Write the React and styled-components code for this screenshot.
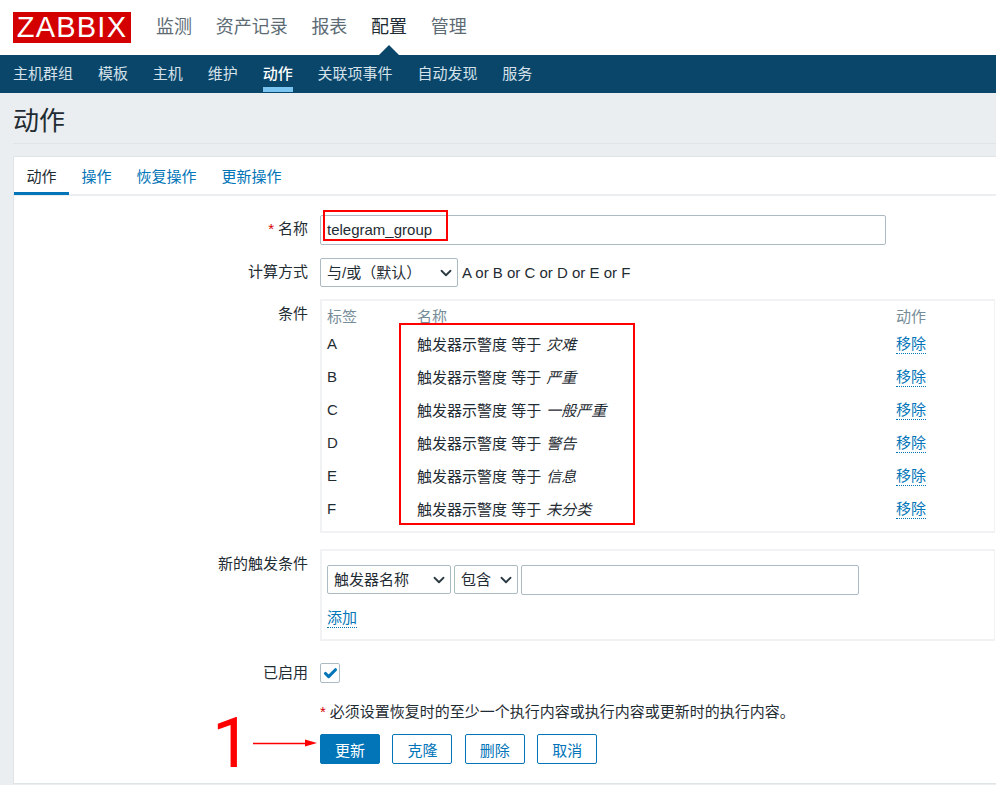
import React from "react";
import styled, { createGlobalStyle } from "styled-components";
import { ChevronDown, Check } from "lucide-react";

const Global = createGlobalStyle`
  html, body { margin: 0; padding: 0; background: #ebeef0; }
  body { width: 996px; height: 785px; overflow: hidden; font-family: "Liberation Sans", "Noto Sans CJK SC", sans-serif; font-size: 15px; color: #1f2c33; text-spacing-trim: space-all; }
  * { box-sizing: border-box; }
`;

const Page = styled.div`position: relative; width: 996px; height: 785px; overflow: hidden;`;
const Header = styled.header`height: 55px; background: #fff; display: flex; align-items: flex-start; padding: 12px 0 0 13px; gap: 25px;`;
const Logo = styled.div`
  width: 118px; height: 31px; background: #d40000; color: #fff;
  font-size: 29px; line-height: 31px; text-align: center; letter-spacing: 1.2px; font-family: "Liberation Sans", sans-serif; font-weight: 400;
`;
const MainNav = styled.nav`display: flex; gap: 23.7px;`;
const MainItem = styled.a`
  position: relative; font-size: 18px; line-height: 30px; color: ${p => p.$active ? "#1f2c33" : "#5d6b74"};
  ${p => p.$active && `&::after { content: ""; position: absolute; left: 50%; margin-left: -10px; top: 33px; border: 10px solid transparent; border-top: 0; border-bottom-color: #0a466a; }`}
`;
const SubNav = styled.nav`height: 38px; background: #0a466a; display: flex; gap: 24.9px; padding-left: 13px;`;
const SubItem = styled.a`
  height: 37px; line-height: 37px; color: ${p => p.$active ? "#fff" : "#d5e2ea"};
  border-bottom: 5px solid ${p => p.$active ? "#7cc4f0" : "transparent"};
  ${p => p.$active && "font-weight: 500;"}
`;
const TitleBar = styled.div`margin-left: 13px; height: 51px; border-bottom: 1px solid #dfe4e7; font-size: 26px; line-height: 56px; color: #1f2c33;`;
const Card = styled.main`margin: 12px 0 0 13px; height: 628px; background: #fff; border: 1px solid #dfe4e7; border-right: 0;`;
const Tabs = styled.div`display: flex; height: 39px; border-bottom: 2px solid #ebeef0;`;
const Tab = styled.a`
  height: 38px; padding: 0 12.5px; line-height: 40px; color: ${p => p.$active ? "#1f2c33" : "#0275b8"};
  border-bottom: 3px solid ${p => p.$active ? "#0275b8" : "transparent"};
`;
const Form = styled.form`padding-top: 19px; display: flex; flex-direction: column;`;
const Row = styled.div`
  display: grid; grid-template-columns: 294px 1fr; column-gap: 12px; margin-bottom: ${p => p.$mb ?? 12}px;
`;
const Label = styled.label`text-align: right; line-height: ${p => p.$lh ?? 28}px; color: #1f2c33;`;
const Star = styled.span`color: #d40000; margin-right: 4px;`;
const TextInput = styled.input`
  height: 30px; border: 1px solid #acbbc2; border-radius: 2px; background: #fff; padding: 0 6px 2px;
  font: inherit; color: #1f2c33; width: ${p => p.$w}px; outline: 0; display: block;
`;
const SelectWrap = styled.div`
  position: relative; width: ${p => p.$w}px; height: ${p => p.$h ?? 29}px; flex: none;
  svg { position: absolute; right: 3px; top: 50%; margin-top: -9px; color: #2b3a42; pointer-events: none; }
`;
const Select = styled.select`
  appearance: none; width: 100%; height: 100%; border: 1px solid #acbbc2; border-radius: 2px; background: #fff;
  font: inherit; color: #1f2c33; padding: 0 6px; outline: 0;
`;
const Inline = styled.div`display: flex; align-items: center; gap: 4px;`;
const Box = styled.div`border: 2px solid #f0f2f3; border-right-width: 1px; margin-right: 1px; padding: ${p => p.$p}; height: ${p => p.$h}px;`;
const Cond = styled.div`
  display: grid; grid-template-columns: 90px 479px 72px; grid-template-rows: 21px; grid-auto-rows: 33px; align-items: center; padding-left: 5px;
`;
const Head = styled.div`color: #768d99; line-height: 20px;`;
const Val = styled.em`font-style: italic; margin-left: 1px;`;
const DotLink = styled.a`color: #0275b8; border-bottom: 1px dotted #0275b8; line-height: 19px; display: inline-block; justify-self: start;`;
const AddLink = styled(DotLink)`margin-top: 13px;`;
const Condition = styled.div`display: flex; gap: 3px;`;
const CheckBox = styled.div`
  width: 20px; height: 20px; border: 1px solid #acbbc2; border-radius: 2px; display: flex; align-items: center; justify-content: center; color: #0275b8; margin-top: 1px;
`;
const Note = styled.div`line-height: 20px; color: #1f2c33; font-size: 15px; white-space: nowrap;`;
const Buttons = styled.div`display: flex; gap: 12.4px; margin-top: 12px;`;
const Button = styled.button`
  width: 60px; height: 30px; border-radius: 2px; font: inherit; padding: 0;
  border: 1px solid #0275b8; color: ${p => p.$primary ? "#fff" : "#0275b8"}; background: ${p => p.$primary ? "#0275b8" : "#fff"};
`;
const RedBox = styled.div`position: absolute; left: ${p => p.$x}px; top: ${p => p.$y}px; width: ${p => p.$w}px; height: ${p => p.$h}px; border: 2px solid #f00; pointer-events: none;`;
const BigOne = styled.div`position: absolute; left: 212px; top: 703px; font-size: 70px; line-height: 80px; color: #f00; font-family: Roboto, sans-serif;`;
const Arrow = styled.svg`position: absolute; left: 252px; top: 737px;`;

const rows = [
  ["A", "灾难"], ["B", "严重"], ["C", "一般严重"], ["D", "警告"], ["E", "信息"], ["F", "未分类"],
];

export default function App() {
  return (
    <Page>
      <Global />
      <Header>
        <Logo>ZABBIX</Logo>
        <MainNav>
          <MainItem>监测</MainItem>
          <MainItem>资产记录</MainItem>
          <MainItem>报表</MainItem>
          <MainItem $active>配置</MainItem>
          <MainItem>管理</MainItem>
        </MainNav>
      </Header>
      <SubNav>
        <SubItem>主机群组</SubItem>
        <SubItem>模板</SubItem>
        <SubItem>主机</SubItem>
        <SubItem>维护</SubItem>
        <SubItem $active>动作</SubItem>
        <SubItem>关联项事件</SubItem>
        <SubItem>自动发现</SubItem>
        <SubItem>服务</SubItem>
      </SubNav>
      <TitleBar>动作</TitleBar>
      <Card>
        <Tabs>
          <Tab $active>动作</Tab>
          <Tab>操作</Tab>
          <Tab>恢复操作</Tab>
          <Tab>更新操作</Tab>
        </Tabs>
        <Form>
          <Row $mb={13}>
            <Label><Star>*</Star>名称</Label>
            <TextInput $w={566} defaultValue="telegram_group" />
          </Row>
          <Row>
            <Label>计算方式</Label>
            <Inline>
              <SelectWrap $w={138}>
                <Select defaultValue="a"><option value="a">与/或（默认）</option></Select>
                <ChevronDown size={18} strokeWidth={2.4} />
              </SelectWrap>
              <span>A or B or C or D or E or F</span>
            </Inline>
          </Row>
          <Row $mb={16}>
            <Label $lh={30}>条件</Label>
            <Box $p="5px 0 0" $h={234}>
              <Cond>
                <Head>标签</Head><Head>名称</Head><Head>动作</Head>
                {rows.map(([k, v]) => (
                  <React.Fragment key={k}>
                    <span>{k}</span>
                    <span>触发器示警度 等于 <Val>{v}</Val></span>
                    <DotLink>移除</DotLink>
                  </React.Fragment>
                ))}
              </Cond>
            </Box>
          </Row>
          <Row $mb={21}>
            <Label $lh={30}>新的触发条件</Label>
            <Box $p="14px 0 0 5px" $h={92}>
              <Condition>
                <SelectWrap $w={124}>
                  <Select defaultValue="a"><option value="a">触发器名称</option></Select>
                  <ChevronDown size={18} strokeWidth={2.4} />
                </SelectWrap>
                <SelectWrap $w={64}>
                  <Select defaultValue="a"><option value="a">包含</option></Select>
                  <ChevronDown size={18} strokeWidth={2.4} />
                </SelectWrap>
                <TextInput $w={338} />
              </Condition>
              <AddLink>添加</AddLink>
            </Box>
          </Row>
          <Row $mb={18}>
            <Label $lh={22}>已启用</Label>
            <CheckBox><Check size={15} strokeWidth={5} /></CheckBox>
          </Row>
          <Row $mb={0}>
            <span />
            <div>
              <Note><Star>*</Star>必须设置恢复时的至少一个执行内容或执行内容或更新时的执行内容。</Note>
              <Buttons>
                <Button $primary type="button">更新</Button>
                <Button type="button">克隆</Button>
                <Button type="button">删除</Button>
                <Button type="button">取消</Button>
              </Buttons>
            </div>
          </Row>
        </Form>
      </Card>
      <RedBox $x={323} $y={210} $w={125} $h={31} />
      <RedBox $x={399} $y={323} $w={236} $h={202} />
      <BigOne>1</BigOne>
      <Arrow width="66" height="12" viewBox="0 0 66 12">
        <path d="M1 6.5H56" stroke="#f00" strokeWidth="1.6" fill="none" />
        <path d="M53 2.5L65 6L53 9.5Z" fill="#f00" />
      </Arrow>
    </Page>
  );
}
